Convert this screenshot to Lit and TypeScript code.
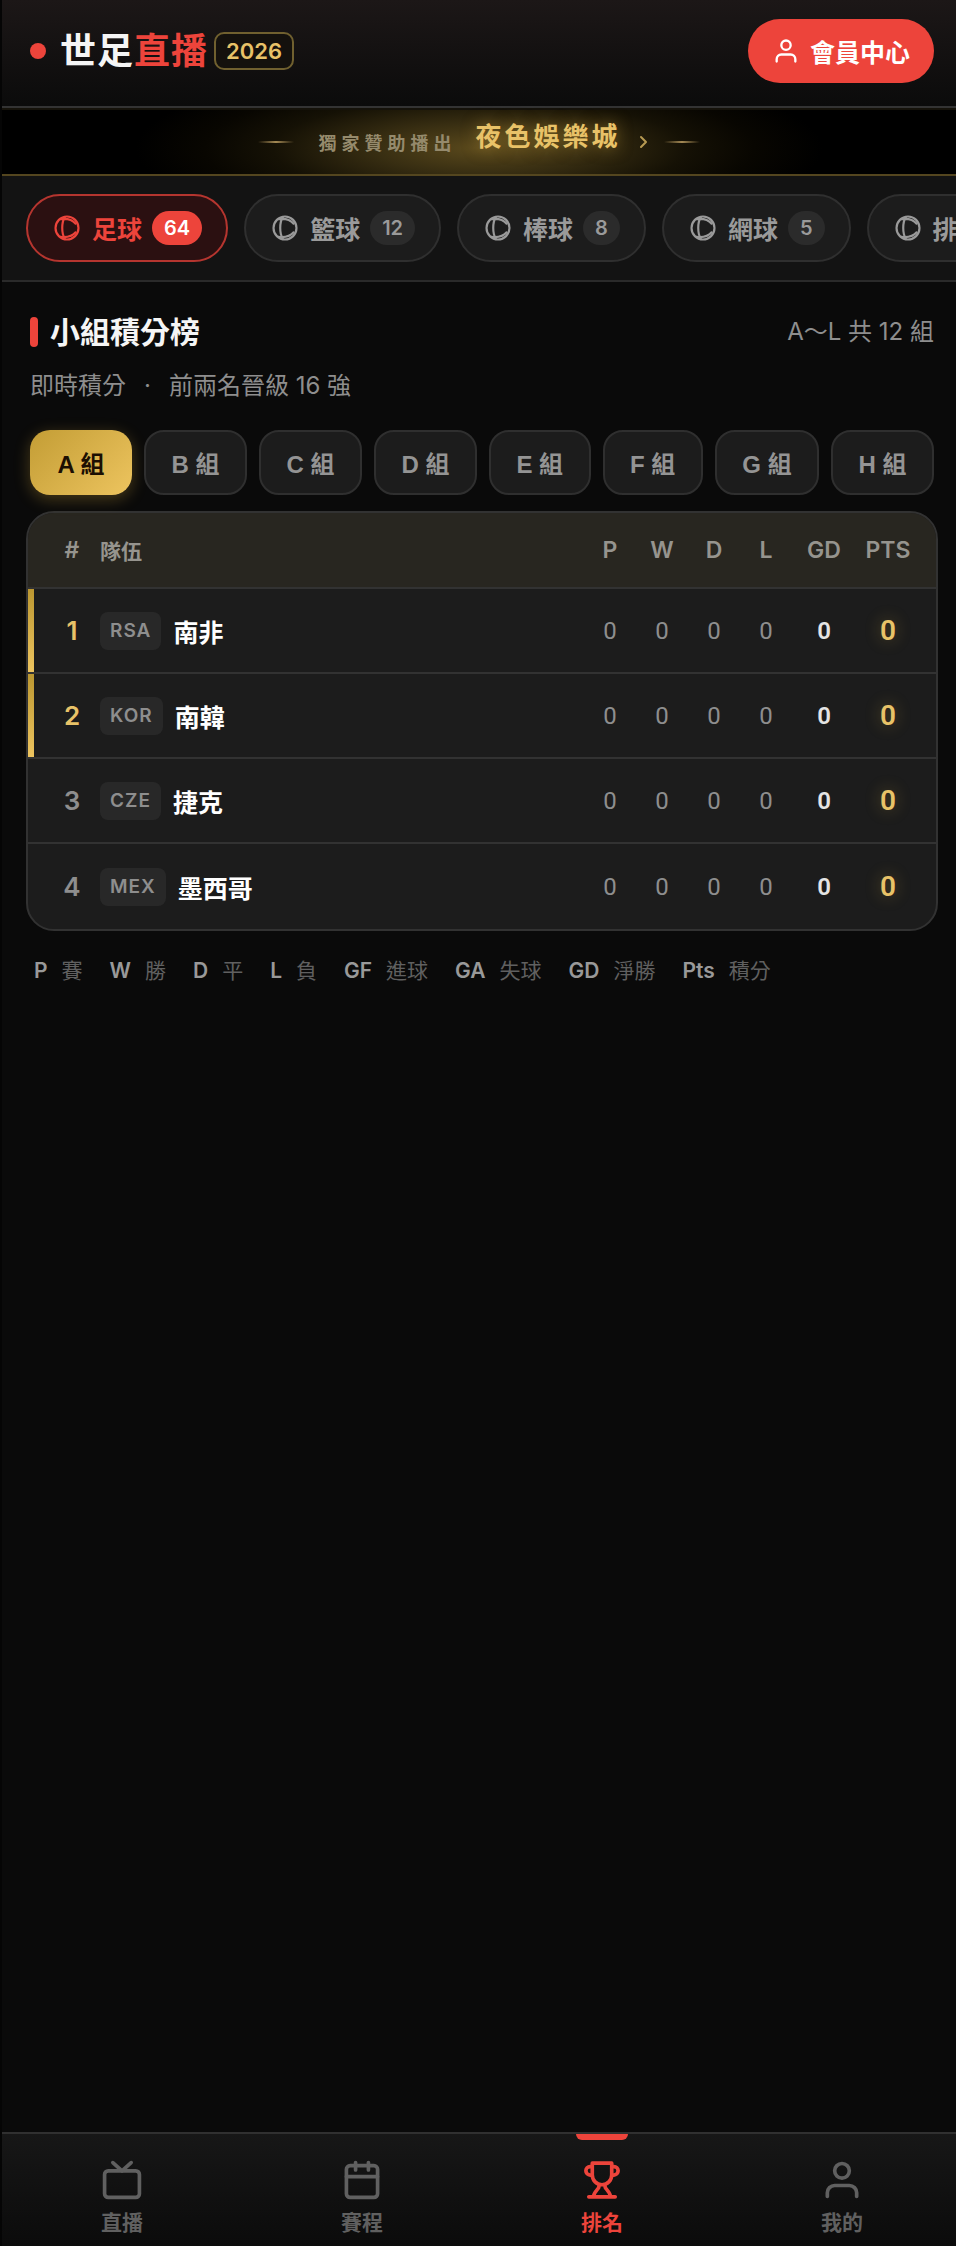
import { LitElement, html, css, svg } from "lit";
import { customElement, state } from "lit/decorators.js";

const ballIcon = svg`<circle cx="12" cy="12" r="10.600" /><path d="M10 2C6.800 7 6.800 17 10 22M6 3.800c4.500-.6 10.500.2 14 4.200M6 20.200c4.500.6 10.500-.2 14-4.200" />`;
const userIcon = svg`<circle cx="12" cy="7" r="4" /><path d="M4 21v-2a4 4 0 0 1 4-4h8a4 4 0 0 1 4 4v2" />`;

const sports = [
  { id: "football", name: "足球", count: 64 },
  { id: "basketball", name: "籃球", count: 12 },
  { id: "baseball", name: "棒球", count: 8 },
  { id: "tennis", name: "網球", count: 5 },
  { id: "volleyball", name: "排球", count: 4 },
];

const groups = ["A", "B", "C", "D", "E", "F", "G", "H"];

const teams = [
  { code: "RSA", name: "南非" },
  { code: "KOR", name: "南韓" },
  { code: "CZE", name: "捷克" },
  { code: "MEX", name: "墨西哥" },
];

const legend = [
  ["P", "賽"],
  ["W", "勝"],
  ["D", "平"],
  ["L", "負"],
  ["GF", "進球"],
  ["GA", "失球"],
  ["GD", "淨勝"],
  ["Pts", "積分"],
];

const tabs = [
  {
    id: "live",
    label: "直播",
    icon: svg`<rect x="2.500" y="7" width="19" height="14.500" rx="2" /><path d="M7 2.500l5 4.500 5-4.500" />`,
  },
  {
    id: "schedule",
    label: "賽程",
    icon: svg`<rect x="3.500" y="4.200" width="17" height="17.300" rx="2" /><path d="M8.500 2.500v4M15.500 2.500v4M3.500 10.200h17" />`,
  },
  {
    id: "rank",
    label: "排名",
    icon: svg`<path d="M6.700 2.800h10.600v6.500a5.300 5.300 0 0 1-10.600 0zM6.700 4.700H5.500a2.300 2.300 0 0 0 0 4.600h1.200M17.300 4.700h1.200a2.300 2.300 0 0 1 0 4.600h-1.200M4.800 21.200h14.400M10.300 14.600v1.200c0 1-2.700 2.500-2.900 5.200M13.700 14.600v1.200c0 1 2.700 2.500 2.900 5.200" />`,
  },
  { id: "me", label: "我的", icon: userIcon },
];

@customElement("app-root")
export class AppRoot extends LitElement {
  @state() private sport = "football";
  @state() private group = "A";
  @state() private tab = "rank";

  static styles = css`
    :host {
      display: flex;
      flex-direction: column;
      min-height: 100vh;
      box-sizing: border-box;
      border-left: 2px solid #050505;
      background: #0a0a0a;
      color: #f5f5f5;
      overflow: hidden;
      font-family: Inter, "Noto Sans CJK TC", sans-serif;
      --red: #ed443b;
      --gold: #e8c268;
      --line: #333;
      --muted: #8e8e8e;
    }
    * {
      box-sizing: border-box;
    }
    button {
      font: inherit;
      color: inherit;
      margin: 0;
      cursor: pointer;
      white-space: nowrap;
    }
    a {
      color: inherit;
      text-decoration: none;
    }
    .icon {
      fill: none;
      stroke: currentColor;
      stroke-width: 2;
      stroke-linecap: round;
      stroke-linejoin: round;
      flex: none;
    }
    .top {
      display: flex;
      align-items: center;
      justify-content: space-between;
      height: 108px;
      padding: 0 22px 4px 28px;
      border-bottom: 2px solid var(--line);
      background: linear-gradient(#1c1717, #0b0b0b);
    }
    .brand {
      display: flex;
      align-items: center;
    }
    .dot {
      width: 16px;
      height: 16px;
      border-radius: 50%;
      background: var(--red);
      margin-right: 14px;
    }
    .logo {
      margin: 0 6px 0 0;
      font-size: 36px;
      line-height: 40px;
      font-weight: 700;
      letter-spacing: 1px;
    }
    .logo em {
      font-style: normal;
      color: var(--red);
    }
    .year {
      border: 2px solid #70602f;
      border-radius: 10px;
      background: #14110d;
      color: var(--gold);
      font-size: 22px;
      line-height: 34px;
      font-weight: 600;
      padding: 0 10px;
    }
    .member {
      display: flex;
      align-items: center;
      gap: 10px;
      height: 64px;
      padding: 0 24px;
      border: 0;
      border-radius: 32px;
      background: var(--red);
      color: #fff;
      font-size: 25px;
      font-weight: 700;
    }
    .sponsor {
      display: flex;
      align-items: center;
      justify-content: center;
      height: 68px;
      border-bottom: 2px solid #54461f;
      border-top: 2px solid #15120a;
      background: radial-gradient(ellipse 36% 130% at 50% 60%, #5a491c, #382e12 30%, #151105 60%, #080601 80%, transparent), #000;
    }
    .dash {
      width: 36px;
      height: 2px;
      background: linear-gradient(90deg, transparent, #a58a55, transparent);
    }
    .by {
      margin: 0 19px 0 24px;
      color: #958a6c;
      font-size: 18px;
      font-weight: 700;
      letter-spacing: 5px;
    }
    .casino {
      color: var(--gold);
      font-size: 26px;
      line-height: 36px;
      font-weight: 700;
      letter-spacing: 3px;
      padding-bottom: 10px;
      text-shadow: 0 0 16px #c9a03a88;
    }
    .chevron {
      margin: 0 14px 0 17px;
      color: #b79a52;
    }
    .sports {
      display: flex;
      gap: 16px;
      padding: 18px 24px;
      border-bottom: 2px solid #2a2a2a;
      background: #131313;
      overflow: hidden;
    }
    .sport {
      display: flex;
      align-items: center;
      flex: none;
      height: 68px;
      padding: 0 24px 0 26px;
      border: 2px solid #2f2f2f;
      border-radius: 34px;
      background: #1c1c1c;
      color: #9a9a9a;
      font-size: 25px;
      font-weight: 700;
    }
    .sport .name {
      margin: 0 10px 0 12px;
    }
    .sport .count {
      min-width: 36px;
      padding: 0 12px;
      border-radius: 17px;
      background: #2b2b2b;
      font-size: 20px;
      line-height: 34px;
      font-weight: 600;
    }
    .sport.on {
      border-color: #b5352f;
      background: #2b1011;
      color: var(--red);
    }
    .sport.on .count {
      background: var(--red);
      color: #fff;
    }
    main {
      flex: 1;
      padding: 30px 18px 24px 24px;
    }
    .head {
      display: flex;
      align-items: center;
      justify-content: space-between;
      padding: 0 4px;
    }
    h2 {
      display: flex;
      align-items: center;
      gap: 12px;
      margin: 0;
      font-size: 30px;
      line-height: 40px;
      font-weight: 700;
    }
    .bar {
      width: 8px;
      height: 30px;
      border-radius: 4px;
      background: var(--red);
    }
    .note {
      color: var(--muted);
      font-size: 24px;
      line-height: 32px;
      margin: 0;
    }
    .sub {
      display: flex;
      gap: 18px;
      padding: 0 4px;
      margin-top: 18px;
    }
    .groups {
      display: flex;
      gap: 12px;
      padding: 0 4px;
      margin: 28px 0 16px;
    }
    .group {
      flex: 1 1 auto;
      height: 65px;
      padding: 0;
      border: 2px solid #2f2f2f;
      border-radius: 20px;
      background: #1c1c1c;
      color: #949494;
      font-family: "Liberation Sans", "Noto Sans CJK TC", sans-serif;
      font-size: 24px;
      font-weight: 700;
    }
    .group.on {
      border-color: transparent;
      background: linear-gradient(135deg, #c39d35, #edc45f) border-box;
      color: #1c0f02;
      box-shadow: 0 4px 16px #c9a03a55;
    }
    .card {
      border: 2px solid #323232;
      border-radius: 28px;
      background: #1c1c1c;
      overflow: hidden;
    }
    table {
      width: 100%;
      border-collapse: separate;
      border-spacing: 0;
      table-layout: fixed;
    }
    th,
    td {
      padding: 0;
      text-align: center;
    }
    th {
      height: 76px;
      border-bottom: 2px solid #323232;
      background: #282620;
      color: #96948e;
      font-size: 23px;
      font-weight: 600;
    }
    td {
      height: 85px;
      border-bottom: 2px solid #323232;
      font-size: 24px;
      font-family: Roboto, "Noto Sans CJK TC", sans-serif;
      color: #8e8e8e;
    }
    tr:last-child td {
      border-bottom: 0;
    }
    .c-rank {
      width: 72px;
    }
    .c-num {
      width: 52px;
    }
    .c-gd {
      width: 64px;
    }
    .c-pts {
      width: 64px;
    }
    .c-end {
      width: 16px;
    }
    th.left,
    td.left {
      text-align: left;
    }
    th.left {
      font-size: 21px;
    }
    td.rank,
    th.rank {
      padding-left: 16px;
    }
    td.rank {
      font-family: Inter, sans-serif;
      font-size: 26px;
      font-weight: 600;
    }
    tr.up td.rank {
      color: var(--gold);
      background: linear-gradient(#bb9731, #edc45f) left / 6px 100% no-repeat;
    }
    .team {
      display: flex;
      align-items: center;
      gap: 12px;
      color: #fff;
      font-size: 25px;
      font-weight: 700;
    }
    .code {
      padding: 0 10px;
      border-radius: 8px;
      background: #282828;
      color: #8e8e8e;
      font-family: Inter, sans-serif;
      font-size: 19px;
      line-height: 38px;
      font-weight: 600;
      letter-spacing: 1px;
    }
    td.gd {
      color: #e4e4e4;
      font-weight: 600;
    }
    td.pts {
      color: var(--gold);
      font-size: 28px;
      font-weight: 600;
      text-shadow: 0 0 16px #c9a03a66;
    }
    .legend {
      display: flex;
      flex-wrap: wrap;
      gap: 8px 27px;
      margin: 24px 0 0;
      padding: 0 8px;
      font-size: 21px;
      line-height: 32px;
      color: #606060;
    }
    .legend div {
      display: flex;
      gap: 14px;
    }
    .legend dt {
      color: #999;
      font-weight: 600;
    }
    .legend dd {
      margin: 0;
    }
    .nav {
      display: grid;
      grid-template-columns: repeat(4, 1fr);
      margin-right: -6px;
      border-top: 2px solid #303030;
      background: linear-gradient(#171717, #0b0b0b);
      height: 114px;
    }
    .nav a {
      position: relative;
      display: flex;
      flex-direction: column;
      align-items: center;
      gap: 6px;
      padding-top: 24px;
      color: #606060;
      font-size: 21px;
      line-height: 30px;
      font-weight: 600;
    }
    .nav a.on {
      color: var(--red);
    }
    .nav a.on::before {
      content: "";
      position: absolute;
      top: 0;
      width: 52px;
      height: 6px;
      border-radius: 0 0 6px 6px;
      background: var(--red);
    }
  `;

  render() {
    return html`
      <header class="top">
        <div class="brand">
          <span class="dot"></span>
          <h1 class="logo">世足<em>直播</em></h1>
          <span class="year">2026</span>
        </div>
        <button class="member">
          <svg class="icon" width="28" height="28" viewBox="0 0 24 24">${userIcon}</svg>會員中心
        </button>
      </header>
      <a class="sponsor" href="#sponsor">
        <span class="dash"></span>
        <span class="by">獨家贊助播出</span>
        <span class="casino">夜色娛樂城</span>
        <svg class="icon chevron" width="12" height="16" viewBox="0 0 12 16"><path d="M3 3l5 5-5 5" /></svg>
        <span class="dash"></span>
      </a>
      <nav class="sports" aria-label="運動">
        ${sports.map(
          (s) => html`<button class="sport ${s.id === this.sport ? "on" : ""}" @click=${() => (this.sport = s.id)}>
            <svg class="icon" width="26" height="26" viewBox="0 0 24 24">${ballIcon}</svg>
            <span class="name">${s.name}</span><span class="count">${s.count}</span>
          </button>`
        )}
      </nav>
      <main>
        <div class="head">
          <h2><span class="bar"></span>小組積分榜</h2>
          <p class="note">A～L 共 12 組</p>
        </div>
        <p class="note sub"><span>即時積分</span><span>·</span><span>前兩名晉級 16 強</span></p>
        <div class="groups">
          ${groups.map(
            (g) => html`<button class="group ${g === this.group ? "on" : ""}" @click=${() => (this.group = g)}>${g} 組</button>`
          )}
        </div>
        <div class="card">
          <table>
            <colgroup>
              <col class="c-rank" /><col />
              <col class="c-num" /><col class="c-num" /><col class="c-num" /><col class="c-num" />
              <col class="c-gd" /><col class="c-pts" /><col class="c-end" />
            </colgroup>
            <thead>
              <tr>
                <th class="rank">#</th><th class="left">隊伍</th>
                <th>P</th><th>W</th><th>D</th><th>L</th><th>GD</th><th>PTS</th><th></th>
              </tr>
            </thead>
            <tbody>
              ${teams.map(
                (t, i) => html`<tr class=${i < 2 ? "up" : ""}>
                  <td class="rank">${i + 1}</td>
                  <td class="left"><div class="team"><span class="code">${t.code}</span>${t.name}</div></td>
                  <td>0</td><td>0</td><td>0</td><td>0</td>
                  <td class="gd">0</td><td class="pts">0</td><td></td>
                </tr>`
              )}
            </tbody>
          </table>
        </div>
        <dl class="legend">
          ${legend.map(([k, v]) => html`<div><dt>${k}</dt><dd>${v}</dd></div>`)}
        </dl>
      </main>
      <nav class="nav" aria-label="主選單">
        ${tabs.map(
          (t) => html`<a href="#${t.id}" class=${t.id === this.tab ? "on" : ""} @click=${() => (this.tab = t.id)}>
            <svg class="icon" width="44" height="44" viewBox="0 0 24 24">${t.icon}</svg>${t.label}
          </a>`
        )}
      </nav>
    `;
  }
}
